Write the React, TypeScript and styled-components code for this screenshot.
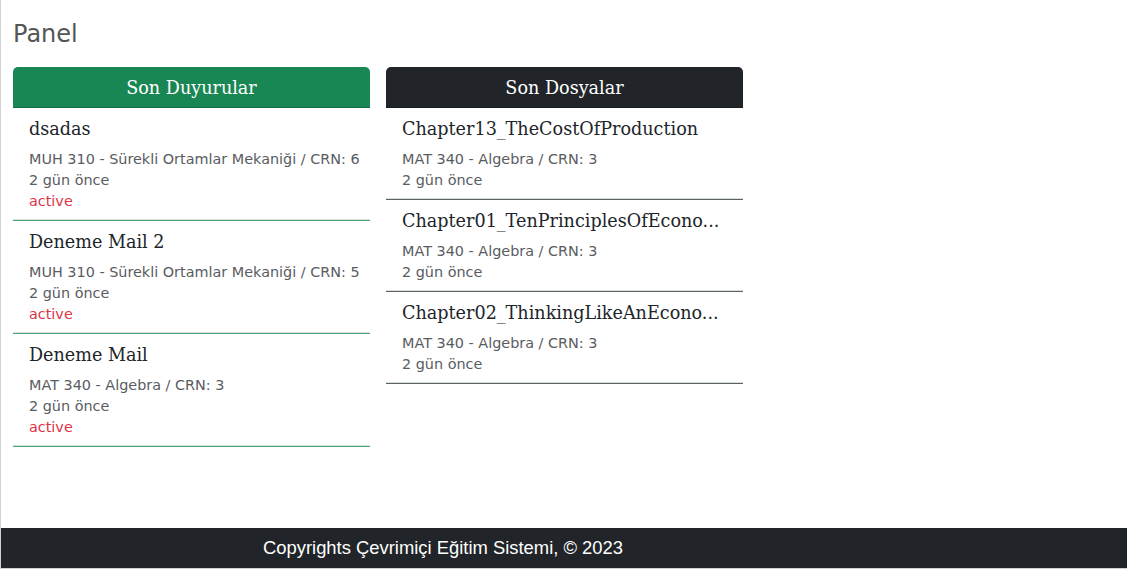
import React from "react";
import styled, { createGlobalStyle } from "styled-components";

const GlobalStyle = createGlobalStyle`
  html, body { margin: 0; padding: 0; background: #fff; }
  * { box-sizing: border-box; }
`;

const Page = styled.div`
  height: 100vh;
  display: flex;
  flex-direction: column;
  border-left: 1px solid #d2d2d2;
  border-bottom: 1px solid #d2d2d2;
`;

const Main = styled.main`
  flex: 1;
  padding: 0 12px;
`;

const Heading = styled.h1`
  margin: 0;
  padding-top: 18px;
  font-family: "DejaVu Sans", sans-serif;
  font-weight: normal;
  font-size: 24px;
  line-height: 32px;
  color: #555;
`;

const Cards = styled.div`
  display: flex;
  gap: 16px;
  margin-top: 17px;
  align-items: flex-start;
`;

const Card = styled.section`
  width: 357px;
`;

const CardHeader = styled.div<{ $bg: string }>`
  height: 41px;
  padding-top: 2px;
  background: ${(p) => p.$bg};
  border-radius: 5px 5px 0 0;
  border-bottom: 1px solid rgba(0, 0, 0, 0.18);
  color: #fff;
  font-family: "DejaVu Serif", serif;
  font-size: 17.6px;
  display: flex;
  align-items: center;
  justify-content: center;
`;

const Item = styled.div<{ $line: string }>`
  padding: 9px 16px 8px;
  border-bottom: 1px solid ${(p) => p.$line};
  box-shadow: inset 0 -1px 0 #d9dfdc;
`;

const Title = styled.div`
  font-family: "DejaVu Serif", serif;
  font-size: 17.6px;
  line-height: 24px;
  color: #212529;
  white-space: nowrap;
  margin-bottom: 8px;
`;

const Meta = styled.div<{ $color?: string }>`
  font-family: "DejaVu Sans", sans-serif;
  font-size: 14.4px;
  line-height: 21px;
  color: ${(p) => p.$color || "#595c5f"};
  white-space: nowrap;
`;

const Footer = styled.footer`
  height: 40px;
  background: #212529;
  color: #fff;
  display: flex;
  align-items: center;
  padding-left: 262px;
  font-family: "Liberation Sans", sans-serif;
  font-size: 18.4px;
`;

const announcements = [
  { title: "dsadas", course: "MUH 310 - Sürekli Ortamlar Mekaniği / CRN: 6" },
  { title: "Deneme Mail 2", course: "MUH 310 - Sürekli Ortamlar Mekaniği / CRN: 5" },
  { title: "Deneme Mail", course: "MAT 340 - Algebra / CRN: 3" },
];

const files = [
  "Chapter13_TheCostOfProduction",
  "Chapter01_TenPrinciplesOfEcono...",
  "Chapter02_ThinkingLikeAnEcono...",
];

export default function App() {
  return (
    <>
      <GlobalStyle />
      <Page>
        <Main>
          <Heading>Panel</Heading>
          <Cards>
            <Card>
              <CardHeader $bg="#198754">Son Duyurular</CardHeader>
              {announcements.map((a) => (
                <Item key={a.title} $line="#4fa57a">
                  <Title>{a.title}</Title>
                  <Meta>{a.course}</Meta>
                  <Meta>2 gün önce</Meta>
                  <Meta $color="#dc3545">active</Meta>
                </Item>
              ))}
            </Card>
            <Card>
              <CardHeader $bg="#212529">Son Dosyalar</CardHeader>
              {files.map((f) => (
                <Item key={f} $line="#5c6166">
                  <Title>{f}</Title>
                  <Meta>MAT 340 - Algebra / CRN: 3</Meta>
                  <Meta>2 gün önce</Meta>
                </Item>
              ))}
            </Card>
          </Cards>
        </Main>
        <Footer>Copyrights Çevrimiçi Eğitim Sistemi, © 2023</Footer>
      </Page>
    </>
  );
}
